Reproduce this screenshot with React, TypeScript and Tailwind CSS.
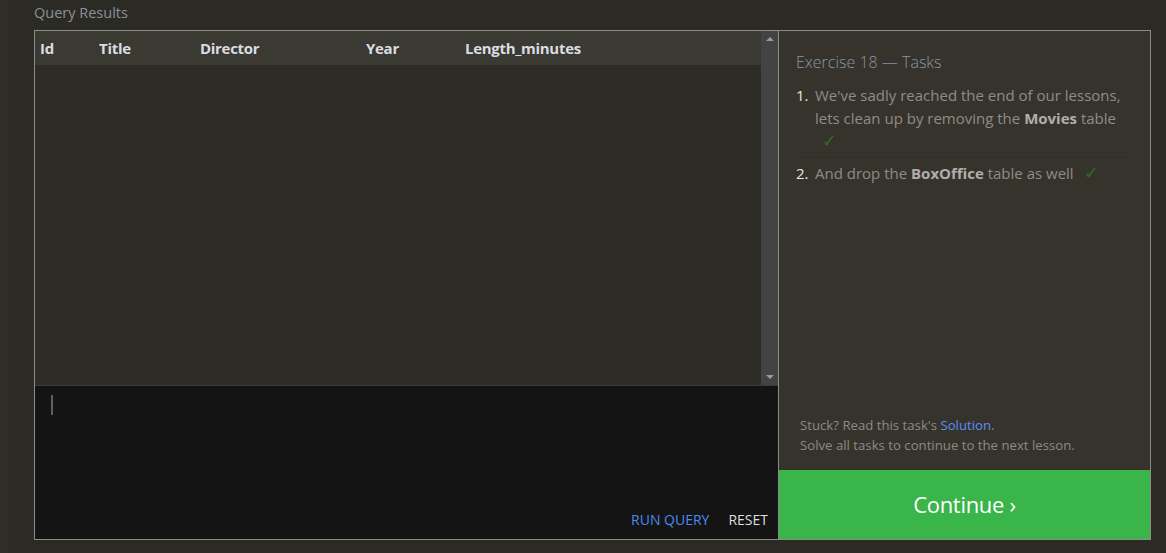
export default function App() {
  const cols = [
    { label: "Id", w: "w-[59px]" },
    { label: "Title", w: "w-[101px]" },
    { label: "Director", w: "w-[166px]" },
    { label: "Year", w: "w-[99px]" },
    { label: "Length_minutes", w: "flex-1" },
  ];

  return (
    <main className="flex h-[553px] w-[1166px] bg-[#2b2a25] font-['Open_Sans','Noto_Sans',sans-serif] overflow-hidden">
      {/* left edge strip */}
      <div className="w-[8px] h-full bg-[#2f2c2a]" />

      <div className="flex flex-col pl-[26px] pt-[3px]">
        <h1 className="text-[14.5px] leading-[20px] text-[#8b9096]">Query Results</h1>

        <div className="mt-[7px] flex w-[1117px] h-[510px] border border-[#8c8c86]">
          {/* Left: results + editor */}
          <section className="flex flex-col w-[743px]">
            <div className="flex h-[354px]">
              <div className="flex-1 flex flex-col bg-[#2d2c27]">
                <div className="flex h-[34px] items-center bg-[#3a3932] pl-[5px] text-[15px] font-bold text-[#d9dde1] tracking-[-0.3px]">
                  {cols.map((c) => (
                    <div key={c.label} className={c.w}>
                      {c.label}
                    </div>
                  ))}
                </div>
              </div>
              {/* scrollbar */}
              <div className="w-[17px] flex flex-col justify-between items-center bg-[#434343] py-[6px]">
                <div className="w-0 h-0 border-l-[4px] border-r-[4px] border-b-[4px] border-l-transparent border-r-transparent border-b-[#9a9a9a]" />
                <div className="w-0 h-0 border-l-[4px] border-r-[4px] border-t-[4px] border-l-transparent border-r-transparent border-t-[#9a9a9a]" />
              </div>
            </div>
            <div className="h-px bg-[#3c3c3a]" />
            <div className="flex-1 flex flex-col bg-[#141414]">
              <div className="pl-[16px] pt-[9px]">
                <div className="w-[2px] h-[20px] bg-[#5f5f5f]" />
              </div>
              <div className="mt-auto flex justify-end items-center gap-[19px] pr-[10px] pb-[9px] text-[14px]">
                <span className="text-[#4c88f2]">RUN QUERY</span>
                <span className="text-[#dedede]">RESET</span>
              </div>
            </div>
          </section>

          {/* Right: tasks */}
          <aside className="flex flex-col flex-1 border-l border-[#8c8c86] bg-[#36332d]">
            <div className="flex-1 flex flex-col pl-[17px] pr-[22px] pt-[20px]">
              <h2 className="text-[16px] leading-[22px] text-[#8796a3] font-light">
                Exercise 18 — Tasks
              </h2>
              <ol className="mt-[11px] text-[15px] leading-[23px] text-[#8e8c87]">
                <li className="flex pb-[4px] border-b border-[#312f2a]">
                  <span className="w-[19px] text-[#e6e6e6]">1.</span>
                  <span className="flex-1">
                    We've sadly reached the end of our lessons, lets clean up by removing the{" "}
                    <b className="text-[#b0aeaa]">Movies</b> table
                    <br />
                    <span className="ml-[7px] inline-block text-[18px] leading-[16px] text-[#2c6b2f]">✓</span>
                  </span>
                </li>
                <li className="flex pt-[4px]">
                  <span className="w-[19px] text-[#e6e6e6]">2.</span>
                  <span className="flex-1">
                    And drop the <b className="text-[#b0aeaa]">BoxOffice</b> table as well
                    <span className="ml-[10px] inline-block text-[18px] leading-[16px] text-[#2c6b2f]">✓</span>
                  </span>
                </li>
              </ol>
              <div className="mt-auto pl-[4px] pb-[15px] text-[13.2px] leading-[20px] text-[#8c8a85]">
                <p>
                  Stuck? Read this task's <span className="text-[#5b8ff3]">Solution</span>.
                </p>
                <p>Solve all tasks to continue to the next lesson.</p>
              </div>
            </div>
            <button
              type="button"
              className="h-[69px] bg-[#39b54a] text-white text-[22px] tracking-[-0.3px]"
            >
              Continue ›
            </button>
          </aside>
        </div>
      </div>
    </main>
  );
}
